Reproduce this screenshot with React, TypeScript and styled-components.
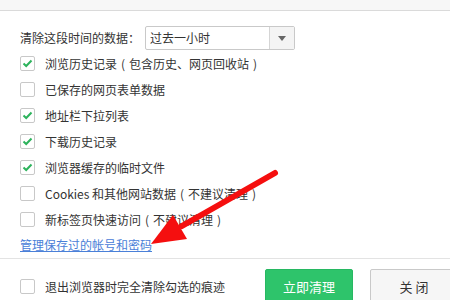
import React from "react";
import styled, { createGlobalStyle } from "styled-components";

const Global = createGlobalStyle`
  html, body { margin: 0; padding: 0; background: #fff; }
  body {
    font-family: "Noto Sans CJK SC", "Noto Sans", sans-serif;
    color: #333;
    font-size: 12px;
  }
`;

const Page = styled.div`
  position: relative;
  width: 450px;
  height: 300px;
  overflow: hidden;
  background: #fff;
`;

const TopStrip = styled.div`
  height: 10px;
  background: #f7f7f7;
  border-bottom: 1px solid #dadada;
`;

const Body = styled.div`
  padding: 15px 0 0 20px;
`;

const SelectRow = styled.div`
  display: flex;
  align-items: center;
  height: 24px;
`;

const Label = styled.span`
  font-size: 12px;
  line-height: 24px;
  width: 125px;
`;

const Select = styled.div`
  display: flex;
  width: 150px;
  height: 24px;
  box-sizing: border-box;
  border: 1px solid #c9c9c9;
  border-radius: 2px;
`;

const SelectText = styled.div`
  flex: 1;
  padding-left: 4px;
  line-height: 22px;
  font-size: 12px;
`;

const SelectBtn = styled.div`
  width: 24px;
  border-left: 1px solid #d5d5d5;
  background: #f4f4f4;
  display: flex;
  align-items: center;
  justify-content: center;
`;

const Tri = styled.div`
  width: 0;
  height: 0;
  border-left: 4px solid transparent;
  border-right: 4px solid transparent;
  border-top: 5px solid #666;
`;

const List = styled.div`
  display: flex;
  flex-direction: column;
`;

const Row = styled.label`
  display: flex;
  align-items: center;
  height: 26px;
  gap: 10px;
  font-size: 12px;
`;

const Paren = styled.span`
  display: inline-block;
  width: 12px;
  text-align: center;
`;

const Box = styled.span`
  width: 15px;
  height: 15px;
  box-sizing: border-box;
  border: 1px solid #c8c8c8;
  border-radius: 2px;
  background: #fff;
  display: flex;
  align-items: center;
  justify-content: center;
  flex-shrink: 0;
`;

const Link = styled.a`
  display: block;
  margin-top: 5px;
  font-size: 12px;
  line-height: 16px;
  color: #4a80d8;
  text-decoration: underline;
`;

const Divider = styled.div`
  height: 1px;
  background: #e3e3e3;
  margin-top: 5px;
`;

const Footer = styled.div`
  display: flex;
  align-items: flex-start;
  padding: 10px 0 0 20px;
`;

const FooterCheck = styled(Row)`
  margin-top: 4px;
  flex: 1;
`;

const Btn = styled.button<{ $primary?: boolean }>`
  width: 88px;
  height: 34px;
  box-sizing: border-box;
  border-radius: 2px;
  font-family: inherit;
  font-size: 13px;
  cursor: pointer;
  flex-shrink: 0;
  border: 1px solid ${(p) => (p.$primary ? "#27b862" : "#c9c9c9")};
  background: ${(p) => (p.$primary ? "#2ec46b" : "#f6f6f6")};
  color: ${(p) => (p.$primary ? "#fff" : "#333")};
  margin-left: ${(p) => (p.$primary ? 0 : 17)}px;
  margin-right: ${(p) => (p.$primary ? 0 : -8)}px;
`;

const Arrow = styled.svg`
  position: absolute;
  left: 0;
  top: 0;
  pointer-events: none;
`;

const Check = () => (
  <svg width="11" height="9" viewBox="0 0 11 9">
    <path d="M1.5 4.5 L4.2 7 L9.5 1.5" fill="none" stroke="#2db35c" strokeWidth="2" />
  </svg>
);

const items: [string, string | null, boolean][] = [
  ["浏览历史记录", "包含历史、网页回收站", true],
  ["已保存的网页表单数据", null, false],
  ["地址栏下拉列表", null, true],
  ["下载历史记录", null, true],
  ["浏览器缓存的临时文件", null, true],
  ["Cookies 和其他网站数据", "不建议清理", false],
  ["新标签页快速访问", "不建议清理", false],
];

export default function App() {
  return (
    <Page>
      <Global />
      <TopStrip />
      <Body>
        <SelectRow>
          <Label>清除这段时间的数据：</Label>
          <Select>
            <SelectText>过去一小时</SelectText>
            <SelectBtn>
              <Tri />
            </SelectBtn>
          </Select>
        </SelectRow>
        <List>
          {items.map(([t, note, c]) => (
            <Row key={t}>
              <Box>{c && <Check />}</Box>
              <span>
                {t}
                {note && (
                  <>
                    <Paren>(</Paren>
                    {note}
                    <Paren>)</Paren>
                  </>
                )}
              </span>
            </Row>
          ))}
        </List>
        <Link>管理保存过的帐号和密码</Link>
      </Body>
      <Divider />
      <Footer>
        <FooterCheck>
          <Box />
          <span>退出浏览器时完全清除勾选的痕迹</span>
        </FooterCheck>
        <Btn $primary>立即清理</Btn>
        <Btn>关 闭</Btn>
      </Footer>
      <Arrow width="450" height="300" viewBox="0 0 450 300">
        <line x1="275" y1="173" x2="182" y2="226" stroke="#f50f0f" strokeWidth="6" strokeLinecap="round" />
        <polygon points="151,244 173,215 187,239" fill="#f50f0f" />
      </Arrow>
    </Page>
  );
}
